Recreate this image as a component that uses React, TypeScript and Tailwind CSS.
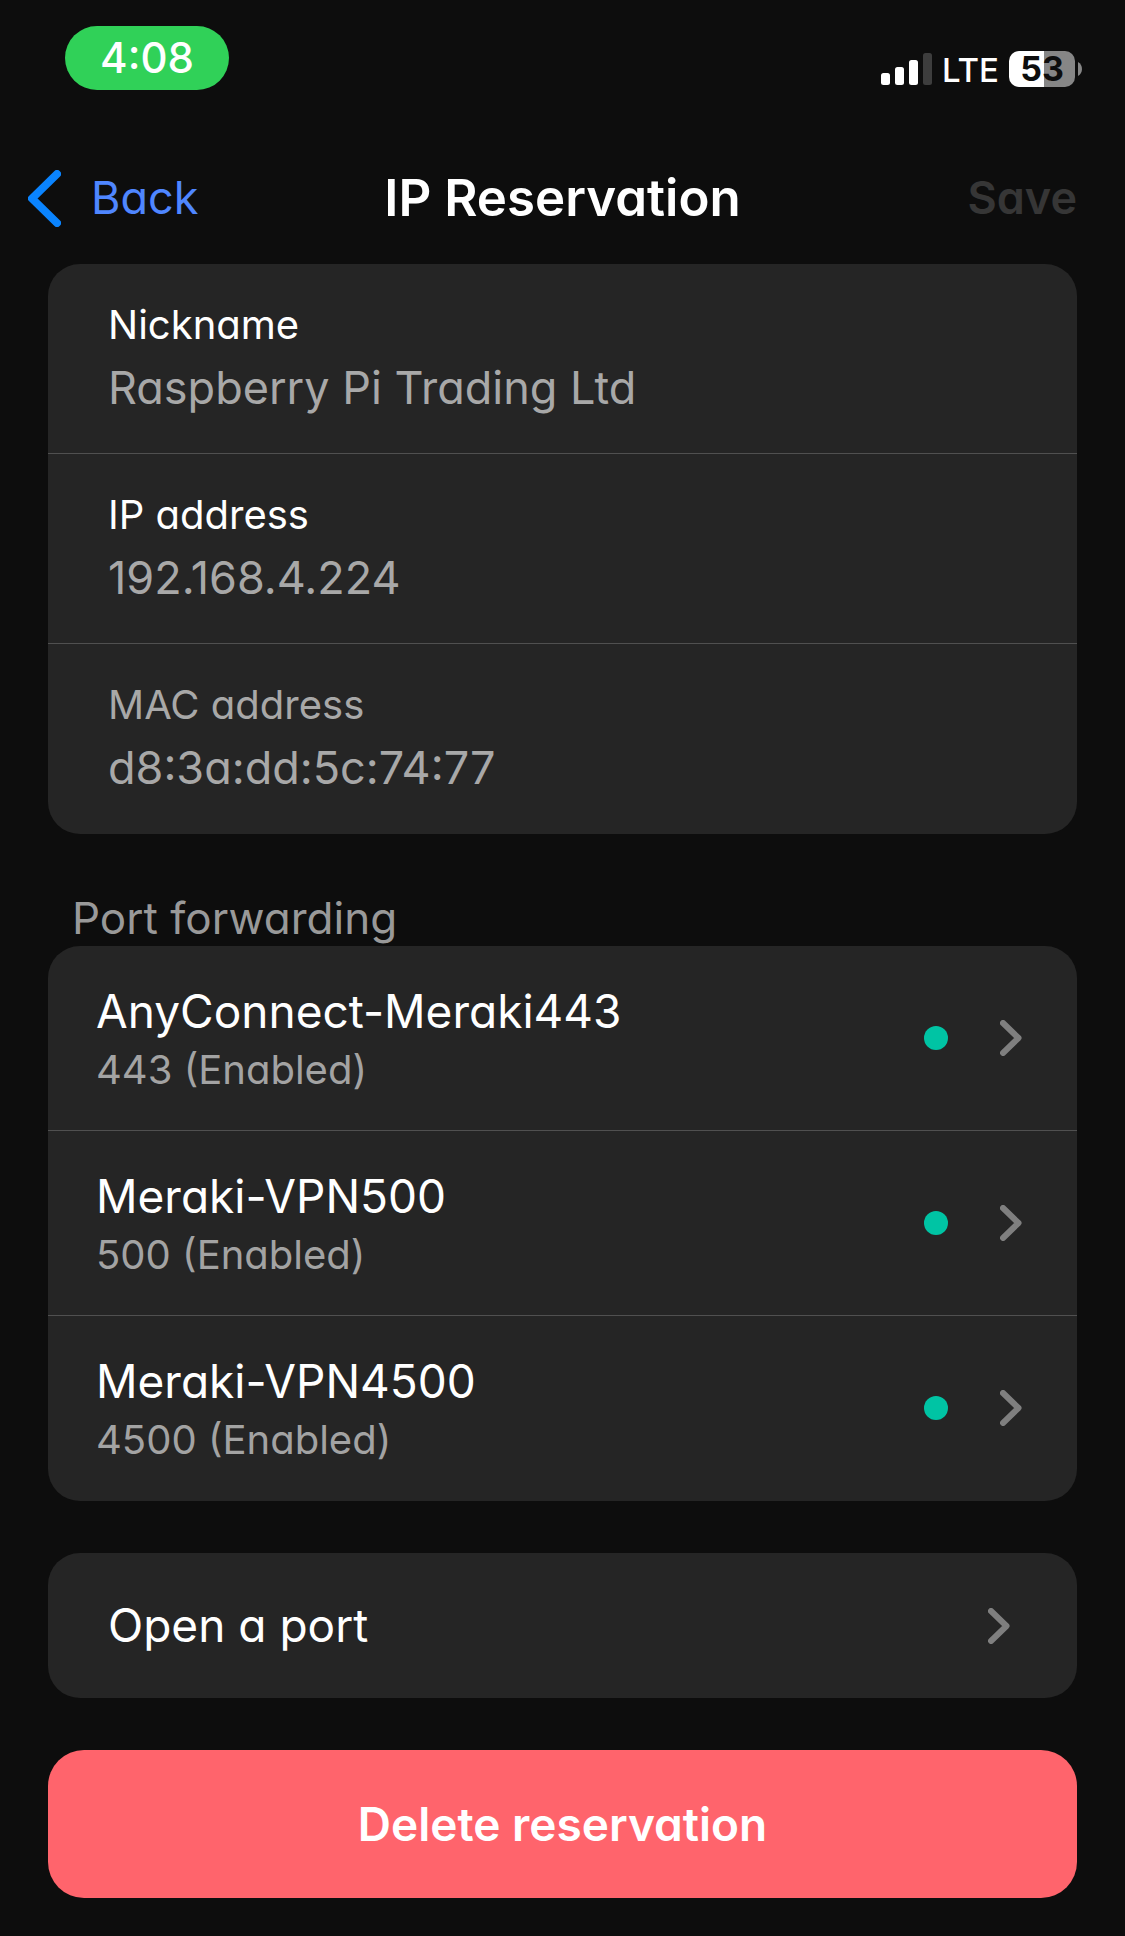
import React, { useState } from 'react';

interface PortRule {
  name: string;
  port: number;
}

const rules: PortRule[] = [
  { name: 'AnyConnect-Meraki443', port: 443 },
  { name: 'Meraki-VPN500', port: 500 },
  { name: 'Meraki-VPN4500', port: 4500 },
];

const Chevron: React.FC = () => (
  <svg width="22" height="36" viewBox="0 0 22 36" fill="none" className="shrink-0 text-[#7f7f7f]">
    <path d="M3 3L18.5 18L3 33" stroke="currentColor" strokeWidth="6" strokeLinecap="round" strokeLinejoin="round" />
  </svg>
);

const StatusBar: React.FC = () => (
  <div className="flex items-start justify-between pt-[26px] pl-[65px] pr-[43px]">
    <div className="flex h-16 w-[164px] items-center justify-center rounded-full bg-[#30d158] text-[42px] font-medium leading-none text-white">
      4:08
    </div>
    <div className="flex h-9 items-center mt-[25px]">
      <svg width="51" height="32" viewBox="0 0 51 32" fill="#fff">
        <rect x="0" y="20" width="9" height="12" rx="2.5" />
        <rect x="14" y="14" width="9" height="18" rx="2.5" />
        <rect x="28" y="7" width="9" height="25" rx="2.5" />
        <rect x="42" y="0" width="9" height="32" rx="2.5" fill="#3d3d3d" />
      </svg>
      <span className="ml-2.5 pt-0.5 text-[33px] font-medium leading-9 text-white">LTE</span>
      <div className="ml-2.5 flex h-9 w-[66px] items-center justify-center rounded-[10px] bg-linear-to-r from-white from-53% to-[#868686] to-53% text-[34px] font-bold leading-9 text-[#0d0d0d]">
        53
      </div>
      <svg width="4" height="14" viewBox="0 0 4 14" className="ml-[3px]">
        <path d="M0 0C5.3 2.5 5.3 11.5 0 14Z" fill="#868686" />
      </svg>
    </div>
  </div>
);

interface FieldProps {
  id: string;
  label: string;
  value: string;
  disabled?: boolean;
  onChange?: (value: string) => void;
}

const Field: React.FC<FieldProps> = ({ id, label, value, disabled, onChange }) => (
  <div className="flex flex-col border-b border-[#505050] px-[60px] pt-[33px] pb-8 last:border-transparent">
    <label htmlFor={id} className={`text-[40px] leading-[56px] ${disabled ? 'text-[#a8a8a8]' : 'text-white'}`}>
      {label}
    </label>
    <input
      id={id}
      type="text"
      value={value}
      disabled={disabled}
      onChange={(e) => onChange?.(e.target.value)}
      className="h-[68px] w-full bg-transparent text-[45px] text-[#a8a8a8] outline-none"
    />
  </div>
);

const App: React.FC = () => {
  const [nickname, setNickname] = useState('Raspberry Pi Trading Ltd');
  const [ip, setIp] = useState('192.168.4.224');

  return (
    <div className="min-h-screen bg-[#0d0d0d] pb-[38px] font-['Inter',sans-serif] [font-feature-settings:'cv11']">
      <StatusBar />

      {/* Nav bar */}
      <header className="mt-[60px] grid h-24 grid-cols-[1fr_auto_1fr] items-center">
        <button className="ml-7 flex items-center gap-[30px] justify-self-start text-[45px] text-[#4f86ff]">
          <svg width="33" height="57" viewBox="0 0 33 57" fill="none" className="text-[#0a84ff]">
            <path d="M29 4L4 28.5L29 53" stroke="currentColor" strokeWidth="8" strokeLinecap="round" strokeLinejoin="round" />
          </svg>
          Back
        </button>
        <h1 className="text-[51px] font-semibold text-white">IP Reservation</h1>
        <button disabled className="mr-12 justify-self-end text-[45px] font-semibold text-[#363636]">
          Save
        </button>
      </header>

      <main className="px-12 mt-[18px]">
        <section className="rounded-[32px] bg-[#252525]">
          <Field id="nickname" label="Nickname" value={nickname} onChange={setNickname} />
          <Field id="ip" label="IP address" value={ip} onChange={setIp} />
          <Field id="mac" label="MAC address" value="d8:3a:dd:5c:74:77" disabled />
        </section>

        <h2 className="mt-14 px-6 text-[44px] leading-[56px] text-[#999999]">Port forwarding</h2>
        <ul className="rounded-[32px] bg-[#252525]">
          {rules.map((rule) => (
            <li key={rule.port} className="border-b border-[#505050] last:border-transparent">
              <button className="flex h-[184px] w-full items-center pl-12 pr-[55px] text-left">
                <span className="flex flex-1 flex-col pt-1">
                  <span className="text-[46px] leading-[60px] text-white">{rule.name}</span>
                  <span className="text-[40px] leading-[58px] text-[#a3a3a3]">{rule.port} (Enabled)</span>
                </span>
                <span className="mr-[52px] size-6 rounded-full bg-[#00c4a4]" />
                <Chevron />
              </button>
            </li>
          ))}
        </ul>

        <button className="mt-[52px] flex h-[145px] w-full items-center justify-between rounded-[32px] bg-[#252525] pl-[60px] pr-[67px] text-[46px] text-white">
          Open a port
          <Chevron />
        </button>

        <button className="mt-[52px] h-[148px] w-full rounded-[36px] bg-[#ff646c] text-[46px] font-semibold text-white">
          Delete reservation
        </button>
      </main>
    </div>
  );
};

export default App;
